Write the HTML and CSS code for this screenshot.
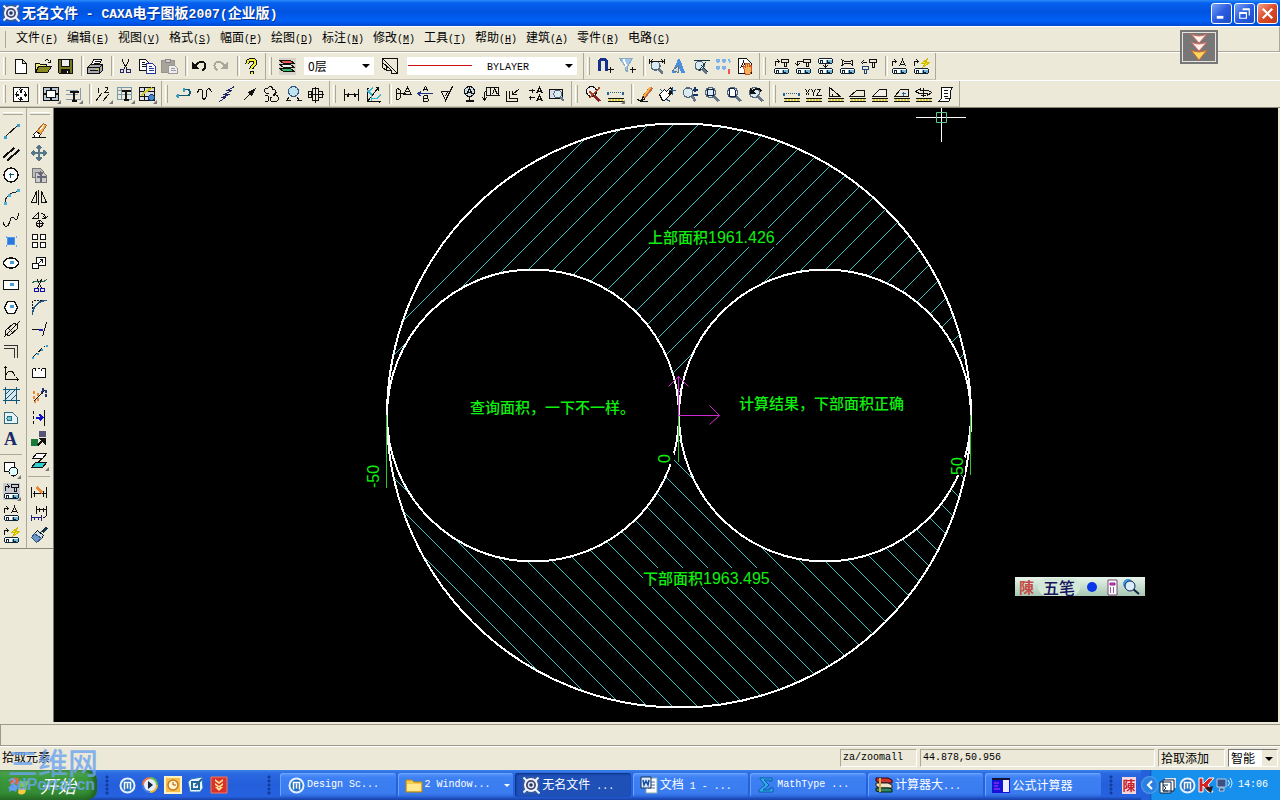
FILE: index.html
```html
<!DOCTYPE html>
<html lang="zh-CN">
<head>
<meta charset="utf-8">
<title>无名文件 - CAXA电子图板2007(企业版)</title>
<link rel="stylesheet" href="styles.css">
</head>
<body>
<svg class="defs" aria-hidden="true">
  <symbol id="hg" viewBox="0 0 18 18"><rect x="2" y="11" width="14" height="5" rx="2" fill="#fff" stroke="#123"/><path d="M9 12h6v3H9z" fill="#6fb8dc" stroke="none"/><path d="M4 12v3M6 12v3M4 13h2M11 12v3h2v-1" stroke="#123"/></symbol>
  <symbol id="lens" viewBox="0 0 18 18"><path d="M12 11l4 5" stroke="#678" stroke-width="3"/><circle cx="8" cy="7" r="5" fill="#d8eaf2" stroke="#567" stroke-width="1.5"/></symbol>
  <symbol id="rule" viewBox="0 0 18 18"><path d="M1 13h16M1 16h16" stroke="#111"/><path d="M2 14.500h14" stroke="#dc3" stroke-width="2" stroke-dasharray="2 1"/></symbol>
  <symbol id="caxa" viewBox="0 0 18 18"><rect width="17" height="17" fill="#345a9c" stroke="none"/><path d="M1 1l5 5M16 1l-4 4M1 16l4-4M12 12l5 5" stroke="#e8f0ff" stroke-width="2"/><circle cx="8.500" cy="8.500" r="6" fill="#446" stroke="#f2f5ff" stroke-width="2"/><circle cx="8.500" cy="8.500" r="2.500" stroke="#dce6ff" stroke-width="1.500" fill="#235"/></symbol>
  <symbol id="maxthon" viewBox="0 0 18 18"><circle cx="9" cy="9" r="7" fill="#246fc4" stroke="#e4f0ff" stroke-width="2"/><path d="M6 13V6h6v7M9 7v5" stroke="#fff" stroke-width="1.500"/></symbol>
</svg>

<header class="title">
  <svg class="i" viewBox="-.5 -.5 18 18"><use href="#caxa"/></svg>
  <h1>无名文件<span class="tl"> - CAXA</span>电子图板<span class="tl">2007(</span>企业版<span class="tl">)</span></h1>
  <div class="win">
    <button aria-label="最小化"><svg viewBox="0 0 20 20"><path d="M5 14h7" stroke-width="3"/></svg></button>
    <button aria-label="还原"><svg viewBox="0 0 20 20"><path d="M8 5h7v7M8 6h7M5 9h7v6H5zM5 10h7"/></svg></button>
    <button class="close" aria-label="关闭"><svg viewBox="0 0 20 20"><path d="M5 5l10 10M15 5L5 15" stroke-width="2.400"/></svg></button>
  </div>
</header>

<nav class="menu">
  <a href="#">文件<span>(<u>F</u>)</span></a><a href="#">编辑<span>(<u>E</u>)</span></a><a href="#">视图<span>(<u>V</u>)</span></a><a href="#">格式<span>(<u>S</u>)</span></a><a href="#">幅面<span>(<u>P</u>)</span></a><a href="#">绘图<span>(<u>D</u>)</span></a><a href="#">标注<span>(<u>N</u>)</span></a><a href="#">修改<span>(<u>M</u>)</span></a><a href="#">工具<span>(<u>T</u>)</span></a><a href="#">帮助<span>(<u>H</u>)</span></a><a href="#">建筑<span>(<u>A</u>)</span></a><a href="#">零件<span>(<u>R</u>)</span></a><a href="#">电路<span>(<u>C</u>)</span></a>
</nav>

<div class="bars">
  <div class="bar">
    <button aria-label="新建"><svg viewBox="-.5 -.5 18 18"><path d="M3 2h7l4 4v10H3zM10 2v4h4" fill="#fff"/></svg></button>
    <button aria-label="打开"><svg viewBox="-.5 -.5 18 18"><path d="M1 15V6h4l1 1h6v2" fill="#ee8"/><path d="M1 15l3-6h13l-4 6z" fill="#8a8a22"/><path d="M10 4c2-3 4-2 5 0M16 2v3h-3"/></svg></button>
    <button aria-label="保存"><svg viewBox="-.5 -.5 18 18"><path d="M2 2h14v14H3l-1-1z" fill="#787820"/><path d="M5 2h8v7H5z" fill="#eee"/><path d="M5 12h8v4H5z" fill="#111"/><path d="M11 13v2" stroke="#fff"/></svg></button>
    <i class="sep"></i>
    <button aria-label="打印"><svg viewBox="-.5 -.5 18 18"><path d="M5 7l2-5h8l-2 5" fill="#fff"/><path d="M8 4h5M7 6h5"/><path d="M1 10l3-3h12v6l-3 3H1z" fill="#aaa"/><path d="M1 10h12v6M13 10l3-3M3 13h8" /><path d="M9 12h2" stroke="#dd2"/></svg></button>
    <i class="sep"></i>
    <button aria-label="剪切"><svg viewBox="-.5 -.5 18 18"><path d="M6 1v3l5 8M12 1v3l-5 8"/><circle cx="5.500" cy="13.500" r="2" stroke="#226"/><circle cx="12" cy="13.500" r="2" stroke="#226"/></svg></button>
    <button aria-label="复制"><svg viewBox="-.5 -.5 18 18"><path d="M1 2h6l3 3v8H1z" fill="#fff"/><path d="M3 5h3M3 7h5M3 9h5"/><path d="M8 6h6l3 3v7H8z" fill="#fff" stroke="#239"/><path d="M10 9h3M10 11h5M10 13h5" stroke="#239"/></svg></button>
    <button aria-label="粘贴"><svg viewBox="-.5 -.5 18 18"><path d="M1 3h13v12H1z" fill="#aaa59a" stroke="#999488"/><path d="M5 2h5v3H5z" fill="#ccc" stroke="#888"/><path d="M8 8h6l3 3v5H8z" fill="#eee" stroke="#999"/><path d="M10 11h4M10 13h5" stroke="#999"/></svg></button>
    <i class="sep"></i>
    <button aria-label="撤消"><svg viewBox="-.5 -.5 18 18"><path d="M2 5v6h6z" fill="#111"/><path d="M4 9c4-6 11-6 11-1 0 2-1 4-3 5" stroke-width="2"/></svg></button>
    <button aria-label="重做"><svg viewBox="-.5 -.5 18 18"><path d="M15 5v6H9z" fill="#aaa69b" stroke="#aaa69b"/><path d="M13 9C9 3 2 3 2 8c0 2 1 4 3 5" stroke="#aaa69b" stroke-width="2"/></svg></button>
    <i class="sep"></i>
    <button aria-label="帮助"><svg viewBox="-.5 -.5 18 18"><path d="M5 6c0-5 8-5 8-1 0 3-4 3-4 6M9 13v3" stroke="#111" stroke-width="4"/><path d="M5 6c0-5 8-5 8-1 0 3-4 3-4 6M9 14v2" stroke="#ee3" stroke-width="2"/></svg></button>
  </div>
  <div class="bar">
    <button aria-label="层控制"><svg viewBox="-.5 -.5 18 18"><rect width="17" height="17" fill="#d6d3ca" stroke="none"/><path d="M1 3h11l4 3H5z" fill="#e55"/><path d="M1 7h11l4 3H5z" fill="#eee"/><path d="M1 11h11l4 3H5z" fill="#3b6"/></svg></button>
    <label class="combo layer"><select aria-label="当前层"><option>0层</option></select></label>
    <button aria-label="线型"><svg viewBox="-.5 -.5 18 18"><path d="M1 1h15v15M1 1l15 15M1 1v9l4 3M1 5l9 8M5 13h5M10 16h6M5 9v4M10 12v4"/></svg></button>
    <label class="combo color"><select aria-label="颜色"><option>BYLAYER</option></select></label>
  </div>
  <div class="bar">
    <button aria-label="捕捉"><svg viewBox="-.5 -.5 18 18"><path d="M3 13V5c0-4 7-4 7 0v8" stroke="#14308c" stroke-width="3"/><path d="M14 9v6M11 12h6"/></svg></button>
    <button aria-label="过滤"><svg viewBox="-.5 -.5 18 18"><path d="M1 1h13l-5 8v5l-2-1V9z" fill="#9cc4ee" stroke="#8ab"/><path d="M5 2l3 7" stroke="#fff" stroke-width="2"/><path d="M14 9v6M11 12h6"/></svg></button>
    <i class="sep"></i>
    <button aria-label="标注设置"><svg viewBox="-.5 -.5 18 18"><use href="#lens" y="2" width="16" height="16"/><path d="M1 1v5M16 1v5M2 4h13M4 2L2 4l2 2M13 2l2 2-2 2"/></svg></button>
    <button aria-label="文字参数"><svg viewBox="-.5 -.5 18 18"><path d="M2 15L8 2l1 0 5 13h-3l-1-4H7l-2 4z" fill="#4a90e0" stroke="#4a90e0"/><path d="M2 13l6-5v7z" fill="#cde" stroke="#678"/></svg></button>
    <button aria-label="拾取设置"><svg viewBox="-.5 -.5 18 18"><use href="#lens" y="2" width="16" height="16"/><path d="M1 3h16M13 5l-7 9M9 8l7 7" stroke="#134"/></svg></button>
    <button aria-label="点样式"><svg viewBox="-.5 -.5 18 18"><path d="M2 2l3 3M5 2L2 5M8 2l3 3M11 2L8 5M14 2l2 3M2 9l3 3M5 9l-3 3M8 9l3 3M11 9l-3 3" stroke="#7ab4ea" stroke-width="2"/><path d="M14 11v5" stroke="#e55" stroke-width="2"/></svg></button>
    <button aria-label="属性"><svg viewBox="-.5 -.5 18 18"><path d="M2 1h8l5 5v10H2z" fill="#fff"/><path d="M4 11l3-7 3 7M5 9h4"/><path d="M7 10V8l2 2V6h2v3V6h2v3l2-1v6l-2 3H9z" fill="#f6b05a" stroke="#c52"/></svg></button>
  </div>
  <div class="bar">
    <button aria-label="尺寸公差"><svg viewBox="-.5 -.5 18 18"><use href="#hg" width="18" height="18"/><path d="M3 8V4h4M5 2l2 2-2 2M9 2h7v3H9zM12 5v4h2V5"/></svg></button>
    <button aria-label="标注编辑"><svg viewBox="-.5 -.5 18 18"><use href="#hg" width="18" height="18"/><path d="M8 4H3v4M1 6l2 2 2-2M9 2h7v3H9zM12 5v4h2V5"/></svg></button>
    <button aria-label="尺寸驱动"><svg viewBox="-.5 -.5 18 18"><use href="#hg" width="18" height="18"/><use href="#hg" y="-10" width="18" height="18"/><path d="M9 6v4M7 8l2 2 2-2"/></svg></button>
    <button aria-label="尺寸关联"><svg viewBox="-.5 -.5 18 18"><use href="#hg" width="18" height="18"/><path d="M3 2l3 2h6l3-2M3 8l3-2h6l3 2M4 2v6M14 2v6"/></svg></button>
    <button aria-label="标题栏"><svg viewBox="-.5 -.5 18 18"><path d="M9 2h7v3H9zM12 5v5h2V5M2 5h4M3 3L1 5l2 2"/><path d="M2 9h6v3H2zM4 12v4h2v-4" stroke="#247"/></svg></button>
    <i class="sep"></i>
    <button aria-label="文字编辑"><svg viewBox="-.5 -.5 18 18"><use href="#hg" width="18" height="18"/><path d="M2 8V4h4M4 2l2 2-2 2M9 9l3-7 3 7M10 7h4"/></svg></button>
    <button aria-label="快速标注"><svg viewBox="-.5 -.5 18 18"><use href="#hg" width="18" height="18"/><path d="M2 8V4h4M4 2l2 2-2 2"/><path d="M15 1L9 6h4l-3 4 7-5h-4z" fill="#fe3" stroke="#cb0"/></svg></button>
  </div>
</div>

<div class="bars">
  <div class="bar">
    <button aria-label="图幅设置"><svg viewBox="-.5 -.5 18 18"><path d="M1 2h15v14H1z" fill="#fff"/><path d="M8 4v3M8 11v3M3 9h3M11 9h3" stroke-width="2"/><path d="M6 5l2-2 3 2M6 13l2 2 3-2M5 6L3 9l2 3M12 6l2 3-2 3"/></svg></button>
    <i class="sep"></i>
    <button class="more" aria-label="调入图框"><svg viewBox="-.5 -.5 18 18"><path d="M1 2h15v13H1z" fill="#b8c8d8"/><path d="M4 5h9v7H4z" fill="#fff"/><path d="M8 2v3M8 12v3M1 8h3M13 8h3" stroke-width="2"/></svg></button>
    <button class="more" aria-label="调入标题栏"><svg viewBox="-.5 -.5 18 18"><path d="M1 5h12M1 9h12M1 14h15V2" stroke="#89a"/><path d="M5 6h9M9 6v9M7 15h5" stroke-width="2"/></svg></button>
    <i class="sep"></i>
    <button class="more" aria-label="生成序号"><svg viewBox="-.5 -.5 18 18"><path d="M4 2v5M3 3h1M10 2h3v2l-3 3h4M1 16L7 8M8 16l6-7"/></svg></button>
    <button class="more" aria-label="填写明细表"><svg viewBox="-.5 -.5 18 18"><path d="M1 2h14v12H1zM1 5h14M1 9h14M5 2v12" stroke="#79a"/><path d="M5 5h9M9 5v9M7 14h5" stroke-width="2"/></svg></button>
    <button class="more" aria-label="明细表样式"><svg viewBox="-.5 -.5 18 18"><path d="M1 2h15v13H1z" fill="#dde"/><path d="M1 6h15M1 11h15M6 2v13"/><path d="M3 10l8-7M6 7l8-5" stroke="#cc2" stroke-width="2"/><circle cx="13" cy="12" r="3" fill="#48c" stroke="#136"/></svg></button>
  </div>
  <div class="bar">
    <button aria-label="双向箭头"><svg viewBox="-.5 -.5 18 18"><path d="M1 10h11c5 0 5-6 0-6H9" stroke="#157" stroke-width="1.500"/><path d="M3 8v4M9 2v4M1 10h3" stroke="#3aa0c0" stroke-width="2"/></svg></button>
    <button aria-label="波浪线"><svg viewBox="-.5 -.5 18 18"><path d="M1 8c1-6 5-6 5 0v2c0 5 3 5 4 0V7c0-5 4-5 5 0"/></svg></button>
    <button aria-label="双折线"><svg viewBox="-.5 -.5 18 18"><path d="M1 16l6-4H3l8-3H6l7-4H9l7-4" stroke="#226"/></svg></button>
    <button aria-label="箭头"><svg viewBox="-.5 -.5 18 18"><path d="M3 15L15 3"/><path d="M14 4l-3 6-3-3z" fill="#111"/></svg></button>
    <button aria-label="云线"><svg viewBox="-.5 -.5 18 18"><path d="M6 8C1 8 1 2 5 3c1-3 6-2 5 1 4-1 5 4 1 5M3 10c4-1 4 4 2 6H2M11 10c4-2 7 3 3 6H9c-3-3-1-5 1-4"/></svg></button>
    <button aria-label="局部放大"><svg viewBox="-.5 -.5 18 18"><circle cx="9" cy="6" r="5" fill="#bfe4ee" stroke="#358"/><path d="M2 16l2-4M15 16l-2-4M1 15h5M12 15h5"/></svg></button>
    <button aria-label="轴孔"><svg viewBox="-.5 -.5 18 18"><path d="M1 9h16M2 6h3v6H2zM6 3h6v12H6zM12 6h4v6h-4M9 1v16"/></svg></button>
  </div>
  <div class="bar">
    <button aria-label="基本标注"><svg viewBox="-.5 -.5 18 18"><path d="M2 3v12M16 3v12M2 9h14M6 7v4M12 7v4M5 8v3M13 8v3"/></svg></button>
    <button aria-label="坐标标注"><svg viewBox="-.5 -.5 18 18"><path d="M3 2v14h13M3 16L14 2M14 2v3M14 2h-3M2 3h2M15 15v2"/><path d="M3 5l4 4v6M17 9l-5 4H6M5 5l4-3" stroke="#38b4d4" stroke-width="1.500"/></svg></button>
    <i class="sep"></i>
    <button aria-label="倒角标注"><svg viewBox="-.5 -.5 18 18"><path d="M2 3c6 0 6 11 0 11M2 3v11M2 8h9M9 9l4-7 4 7zM11 6h4"/></svg></button>
    <button aria-label="基准代号"><svg viewBox="-.5 -.5 18 18"><path d="M1 8h15M5 6L1 8l4 3" stroke="#238"/><path d="M6 6l3-5 3 5M7 4h4M7 10v6h3c3 0 2-3 0-3H7M10 13c2 0 2-3 0-3H7"/></svg></button>
    <button aria-label="粗糙度"><svg viewBox="-.5 -.5 18 18"><path d="M2 6h8M3 6l4 9 7-14M9 6l-2 5"/></svg></button>
    <button aria-label="基准"><svg viewBox="-.5 -.5 18 18"><circle cx="9" cy="6" r="5" fill="#cfdfe8"/><path d="M6 9l3-6 3 6M7 7h4M9 11v4"/><path d="M5 15h8" stroke-width="2"/></svg></button>
    <button aria-label="形位公差"><svg viewBox="-.5 -.5 18 18"><path d="M4 2h12v8H4zM8 2v8M10 9l2-6 3 6M2 6v9M0 12l2 3 2-3M4 6H2M13 10h4"/></svg></button>
    <button aria-label="剖切符号"><svg viewBox="-.5 -.5 18 18"><path d="M2 5v11h11v-4M5 5v8h8M8 9l7-6M8 9V5M8 9h4"/></svg></button>
    <button aria-label="向视图"><svg viewBox="-.5 -.5 18 18"><path d="M2 5h6M6 3v4M2 12h6M4 10v4M10 8l3-6 3 6M11 6h4M10 16l3-6 3 6M11 14h4"/></svg></button>
    <button aria-label="引出说明"><svg viewBox="-.5 -.5 18 18"><path d="M1 4h13v9H1z" fill="#dde"/><use href="#lens" x="3" y="3" width="14" height="14"/></svg></button>
  </div>
  <div class="bar">
    <button aria-label="显示窗口"><svg viewBox="-.5 -.5 18 18"><circle cx="7" cy="6" r="5" fill="#eee"/><path d="M10 10l5 6" stroke="#822" stroke-width="3"/><path d="M5 13l10-11M5 6l4 4" stroke="#a42" stroke-width="1.500"/></svg></button>
    <button class="more" aria-label="测距"><svg viewBox="-.5 -.5 18 18"><use href="#rule" width="18" height="18"/><path d="M1 7h16" stroke="#357" stroke-dasharray="1 1"/><path d="M1 6v3M16 6v3" stroke="#269" stroke-width="2"/></svg></button>
    <i class="sep"></i>
    <button aria-label="重画"><svg viewBox="-.5 -.5 18 18"><path d="M15 2L7 12" stroke="#b64" stroke-width="4"/><path d="M14 2L7 11" stroke="#f8b040" stroke-width="2"/><path d="M7 11l-2 4 4-2M1 14l4 2h6"/></svg></button>
    <button aria-label="平移"><svg viewBox="-.5 -.5 18 18"><path d="M1 9l5-5 2 2 4-4 1 2-3 4 4-2-4 5-4 4H4z" fill="#fff"/><path d="M14 1v8M10 5h7M2 4l3 3M8 14l4 2" stroke="#258"/></svg></button>
    <button aria-label="缩放"><svg viewBox="-.5 -.5 18 18"><use href="#lens" width="17" height="18"/><path d="M12 4h5M14 1v5M12 9h5" stroke="#136" stroke-width="2"/></svg></button>
    <button aria-label="窗口缩放"><svg viewBox="-.5 -.5 18 18"><use href="#lens" width="18" height="18"/><path d="M5 4h6v6H5z" stroke="#124"/></svg></button>
    <button aria-label="显示全部"><svg viewBox="-.5 -.5 18 18"><use href="#lens" width="18" height="18"/><path d="M5 3h4l2 2v6H5z" stroke="#124" fill="#fff"/></svg></button>
    <button aria-label="显示回溯"><svg viewBox="-.5 -.5 18 18"><use href="#lens" width="18" height="18"/><path d="M4 3v5h5z" fill="#111"/><path d="M6 6c3-4 8-3 9 0" stroke-width="2"/></svg></button>
  </div>
  <div class="bar">
    <button aria-label="两点距离"><svg viewBox="-.5 -.5 18 18"><use href="#rule" width="18" height="18"/><path d="M1 8h16" stroke="#357" stroke-dasharray="1 1"/><path d="M1 7v3M16 7v3" stroke="#269" stroke-width="2"/></svg></button>
    <button aria-label="点坐标"><svg viewBox="-.5 -.5 18 18"><use href="#rule" width="18" height="18"/><path d="M1 4l4 6M5 4l-4 6M7 4l2 3 2-3M9 7v3M12 4h4l-4 6h5"/></svg></button>
    <button aria-label="角度"><svg viewBox="-.5 -.5 18 18"><use href="#rule" width="18" height="18"/><path d="M3 2v9h11zM6 8v2"/></svg></button>
    <button aria-label="元素属性"><svg viewBox="-.5 -.5 18 18"><use href="#rule" width="18" height="18"/><path d="M1 11h15V5H8z"/></svg></button>
    <button aria-label="周长"><svg viewBox="-.5 -.5 18 18"><use href="#rule" width="18" height="18"/><path d="M2 11h14V4H9z" fill="#f4f2e8"/></svg></button>
    <button aria-label="面积"><svg viewBox="-.5 -.5 18 18"><use href="#rule" width="18" height="18"/><path d="M2 11h14V4H8z"/><path d="M11 6v4M9 8h4" stroke="#26a"/></svg></button>
    <button aria-label="重心"><svg viewBox="-.5 -.5 18 18"><use href="#rule" width="18" height="18"/><path d="M1 6l5-3v2h8l3 2-4 3v-2H5zM6 10h5M9 2v9"/></svg></button>
    <button aria-label="系统状态"><svg viewBox="-.5 -.5 18 18"><path d="M5 2h11l-2 3v8l-2 3H2l3-3z" fill="#fff"/><path d="M7 5h4M7 8h4M7 11h4M14 4v9H8"/></svg></button>
  </div>
</div>

<main class="work">
  <div class="sides">
    <div class="side">
      <button aria-label="直线"><svg viewBox="-.5 -.5 18 18"><path d="M3 14L15 3"/><path d="M1 15h3M14 3h3" stroke="#3aa0d0" stroke-width="3"/></svg></button>
      <button aria-label="平行线"><svg viewBox="-.5 -.5 18 18"><path d="M1 13L12 3M5 16L17 5" stroke-width="2"/></svg></button>
      <button aria-label="圆"><svg viewBox="-.5 -.5 18 18"><circle cx="8.500" cy="8.500" r="7" fill="#fff" stroke-width="1.500"/><path d="M8 6v5M6 8h5" stroke="#157" stroke-width="1.500"/></svg></button>
      <button aria-label="圆弧"><svg viewBox="-.5 -.5 18 18"><path d="M2 15C3 8 8 4 15 3" stroke="#123"/><path d="M1 15h3M5 7h3M14 2h3" stroke="#4ab0d8" stroke-width="3"/></svg></button>
      <button aria-label="样条"><svg viewBox="-.5 -.5 18 18"><path d="M1 12c1 6 5 4 6 0s2-7 5-4 3-1 4-5"/></svg></button>
      <button aria-label="点"><svg viewBox="-.5 -.5 18 18"><path d="M5 5h7v7H5z" fill="#2878e0" stroke="#4a98ee"/><path d="M3 4h1M13 4h1M3 13h1M13 13h1" stroke="#6af" stroke-width="2"/></svg></button>
      <button aria-label="椭圆"><svg viewBox="-.5 -.5 18 18"><ellipse cx="8.500" cy="8.500" rx="7.500" ry="5" fill="#fff" stroke-width="1.500"/><path d="M7 8h4" stroke="#48a0d0" stroke-width="3"/></svg></button>
      <button aria-label="矩形"><svg viewBox="-.5 -.5 18 18"><path d="M1 4h15v9H1z" fill="#fff" stroke-width="1.500"/><path d="M7 8h4" stroke="#48a0d0" stroke-width="3"/></svg></button>
      <button aria-label="多边形"><svg viewBox="-.5 -.5 18 18"><path d="M5 3h7l3 6-3 6H5L2 9z" fill="#fff"/><path d="M7 8h4" stroke="#48a0d0" stroke-width="3"/></svg></button>
      <button aria-label="孔轴"><svg viewBox="-.5 -.5 18 18"><path d="M3 10l8-7 4 1v4l-8 7-4-1zM1 17L17 1M6 8l4 4"/></svg></button>
      <button aria-label="等距线"><svg viewBox="-.5 -.5 18 18"><path d="M1 3h14v12M1 6h11v9" stroke="#333"/></svg></button>
      <button aria-label="公式曲线"><svg viewBox="-.5 -.5 18 18"><path d="M3 2v13h13M1 4l2-2 2 2M14 13l2 2-2 2M3 11c4-7 7-5 10 1"/></svg></button>
      <button aria-label="剖面线"><svg viewBox="-.5 -.5 18 18"><path d="M3 3h11v11H3z" fill="#d4e8ee"/><path d="M3 0v17M14 0v17M0 3h17M0 14h17M3 8l5-5M3 13L13 3M8 14l6-6" stroke="#157"/></svg></button>
      <button aria-label="填充"><svg viewBox="-.5 -.5 18 18"><path d="M2 4h8l5 5v6H2z" fill="#e6f4f8" stroke="#367"/><circle cx="7" cy="10" r="2.500" fill="#7cc" stroke="#268"/></svg></button>
      <button aria-label="文字"><svg viewBox="-.5 -.5 18 18"><text x="8" y="14" class="ga">A</text></svg></button>
      <i class="sep"></i>
      <button class="more" aria-label="块操作"><svg viewBox="-.5 -.5 18 18"><path d="M2 2h10v9H2z" fill="#fff"/><circle cx="11" cy="11" r="4.500" fill="#dff"/></svg></button>
      <button class="more" aria-label="库操作"><svg viewBox="-.5 -.5 18 18"><rect width="17" height="17" fill="#c8ccd0" stroke="none"/><use href="#hg" width="18" height="18"/><path d="M3 8V4h4M5 2l2 2-2 2M9 2h7v3H9zM12 5v4h2V5"/></svg></button>
      <button aria-label="文本编辑"><svg viewBox="-.5 -.5 18 18"><use href="#hg" width="18" height="18"/><path d="M2 8V4h4M4 2l2 2-2 2M9 9l3-7 3 7M10 7h4"/></svg></button>
      <button aria-label="快速编辑"><svg viewBox="-.5 -.5 18 18"><use href="#hg" width="18" height="18"/><path d="M2 8V4h4M4 2l2 2-2 2"/><path d="M15 1L9 6h4l-3 4 7-5h-4z" fill="#fe3" stroke="#cb0"/></svg></button>
    </div>
    <div class="side">
      <button aria-label="删除"><svg viewBox="-.5 -.5 18 18"><path d="M1 15h14"/><path d="M6 9l7-8 3 2-6 9z" fill="#f0b050" stroke="#a63"/><path d="M3 12l3-3 4 3-2 3H5z" fill="#fff"/><path d="M9 8l4-5" stroke="#fff"/></svg></button>
      <button aria-label="平移"><svg viewBox="-.5 -.5 18 18"><path d="M8.500 2v13M2 8.500h13M6 4l2.500-3L11 4M6 13l2.500 3 2.500-3M4 6L1 8.500 4 11M13 6l3 2.500-3 2.500" stroke="#578" stroke-width="2"/></svg></button>
      <button aria-label="平移复制"><svg viewBox="-.5 -.5 18 18"><path d="M2 2h8l3 3v6H2z" fill="#bbb" stroke="#777"/><path d="M5 6h8l3 3v7H5z" fill="#ccc" stroke="#777"/><path d="M10 6v9M6 10h9M8 8l2-2 2 2" stroke="#667" stroke-width="2"/></svg></button>
      <button aria-label="镜像"><svg viewBox="-.5 -.5 18 18"><path d="M6 3v11H1zM11 3v11h5zM8 1v15"/></svg></button>
      <button aria-label="旋转"><svg viewBox="-.5 -.5 18 18"><path d="M2 8l6-6v6zM10 3c4 0 5 3 5 5h-4M13 6l2 2 2-2"/><circle cx="9" cy="13" r="3"/><path d="M9 9v8M5 13h8"/></svg></button>
      <button aria-label="阵列"><svg viewBox="-.5 -.5 18 18"><path d="M2 2h5v5H2zM10 2h5v5h-5zM2 10h5v5H2zM10 10h5v5h-5z" fill="#fff"/></svg></button>
      <button aria-label="比例缩放"><svg viewBox="-.5 -.5 18 18"><path d="M6 3h9v8H6z" fill="#fff"/><path d="M2 9h6v5H2z" fill="#fff"/><path d="M8 9l4-4M12 8V5H9"/></svg></button>
      <button aria-label="裁剪"><svg viewBox="-.5 -.5 18 18"><path d="M2 6c5-4 9 3 14-3" stroke="#265"/><path d="M7 3l4 9M11 3l-4 9"/><circle cx="6" cy="13.500" r="2" stroke="#11a"/><circle cx="12" cy="13.500" r="2" stroke="#11a"/></svg></button>
      <button aria-label="过渡"><svg viewBox="-.5 -.5 18 18"><path d="M2 16V2h14" stroke-dasharray="2 1"/><path d="M2 16C2 8 8 2 16 2" stroke="#258" stroke-width="1.500"/></svg></button>
      <button aria-label="延伸"><svg viewBox="-.5 -.5 18 18"><path d="M1 9h7"/><path d="M8 9h4" stroke="#22c" stroke-width="2"/><path d="M16 2l-4 14"/></svg></button>
      <button aria-label="打断"><svg viewBox="-.5 -.5 18 18"><path d="M3 14L15 3" stroke-dasharray="5 2"/><path d="M1 15h2M6 11h2M10 7h2M15 3h2" stroke="#3aa0d0" stroke-width="2"/></svg></button>
      <button aria-label="拉伸"><svg viewBox="-.5 -.5 18 18"><path d="M2 4h3M11 4h4v9H2V4" fill="#fff"/><path d="M5 4v2M11 4v2M7 4h2"/></svg></button>
      <button aria-label="打散"><svg viewBox="-.5 -.5 18 18"><path d="M11 3h2M14 5h2M10 6h2M14 9h2" stroke="#237" stroke-width="3"/><path d="M2 6h2M6 8h2M2 11h2M6 13h2M3 15h2" stroke="#e83" stroke-width="3"/><path d="M3 15L14 4"/></svg></button>
      <button aria-label="局部移动"><svg viewBox="-.5 -.5 18 18"><path d="M3 2v14" stroke-dasharray="3 2"/><path d="M14 1v16" stroke-width="1.500"/><path d="M5 9h7M9 6l3 3-3 3" stroke="#11c" stroke-width="2"/></svg></button>
      <button aria-label="格式刷"><svg viewBox="-.5 -.5 18 18"><path d="M9 1h6v5H9z" fill="#557" stroke="#557"/><path d="M1 9h6v6H1z" fill="#197a3a" stroke="#197a3a"/><path d="M7 15l6-6" stroke-width="2"/><path d="M9 8h6v6z" fill="#111"/></svg></button>
      <button class="more" aria-label="图层变换"><svg viewBox="-.5 -.5 18 18"><path d="M6 1h10l-4 5H2z" fill="#fff"/><path d="M5 10h11l-4 5H1z" fill="#3cc"/><path d="M12 6l-5 4"/></svg></button>
      <i class="sep"></i>
      <button aria-label="标注修改"><svg viewBox="-.5 -.5 18 18"><path d="M1 4v11M16 4v11M2 11h13M4 8v6M13 8v6"/><path d="M6 5l6 5" stroke="#e83" stroke-width="3"/></svg></button>
      <button aria-label="标注间距"><svg viewBox="-.5 -.5 18 18"><path d="M6 1v8M16 1v8M6 5h10M9 3v4M13 3v4M16 9c0 4-2 4-4 4"/><path d="M1 10v6M11 10v6M1 13h10M4 12v3M8 12v3" stroke="#227"/></svg></button>
      <button aria-label="刷新"><svg viewBox="-.5 -.5 18 18"><path d="M16 1l-4 5" stroke="#134" stroke-width="3"/><path d="M7 4l6 5-2 3-7-5z" fill="#cde"/><path d="M4 7l7 5-5 4-5-5z" fill="#6a98c8" stroke="#357"/></svg></button>
    </div>
  </div>

  <svg class="canvas" viewBox="54 108 1224 614" role="img" aria-label="绘图区">
    <defs>
      <clipPath id="top"><path d="M387 415.500A292 292 0 0 1 971 415.500A146 146 0 0 0 679 415.500A146 146 0 0 0 387 415.500"/></clipPath>
      <clipPath id="bot"><path d="M387 415.500A292 292 0 0 0 971 415.500A146 146 0 0 1 679 415.500A146 146 0 0 1 387 415.500"/></clipPath>
    </defs>
    <g class="hatch" clip-path="url(#top)">
      <path d="M204.500 519.500l400-400M229.500 519.500l400-400M253.500 519.500l400-400M278.500 519.500l400-400M303.500 519.500l400-400M328.500 519.500l400-400M352.500 519.500l400-400M377.500 519.500l400-400M402.500 519.500l400-400M427.500 519.500l400-400M452.500 519.500l400-400M476.500 519.500l400-400M501.500 519.500l400-400M526.500 519.500l400-400M551.500 519.500l400-400M575.500 519.500l400-400M600.500 519.500l400-400M625.500 519.500l400-400M650.500 519.500l400-400M674.500 519.500l400-400M699.500 519.500l400-400M724.500 519.500l400-400M749.500 519.500l400-400M774.500 519.500l400-400M798.500 519.500l400-400M823.500 519.500l400-400M848.500 519.500l400-400"/>
    </g>
    <g class="hatch" clip-path="url(#bot)">
      <path d="M232.500 415.500l400 400M257.500 415.500l400 400M282.500 415.500l400 400M307.500 415.500l400 400M331.500 415.500l400 400M356.500 415.500l400 400M381.500 415.500l400 400M406.500 415.500l400 400M430.500 415.500l400 400M455.500 415.500l400 400M480.500 415.500l400 400M505.500 415.500l400 400M530.500 415.500l400 400M555.500 415.500l400 400M579.500 415.500l400 400M604.500 415.500l400 400M629.500 415.500l400 400M654.500 415.500l400 400M679.500 415.500l400 400M703.500 415.500l400 400M728.500 415.500l400 400M753.500 415.500l400 400M778.500 415.500l400 400M802.500 415.500l400 400M827.500 415.500l400 400M852.500 415.500l400 400M877.500 415.500l400 400M901.500 415.500l400 400"/>
    </g>
    <g class="ring"><circle cx="679" cy="415.500" r="292"/><circle cx="533" cy="415.500" r="146"/><circle cx="825" cy="415.500" r="146"/></g>
    <path class="mask" d="M648 228h128v19H648zM643 568h128v19H643zM656 453h18v11h-18zM948 457h17v18h-17z"/>
    <path class="ext" d="M386.500 415v73M678.500 415v47M970.500 415v60"/>
    <path class="axis" d="M678.500 415.500V376M668.500 386.500l10-10 10 10M679 415.500h40M709.500 405.500l10 10-10 9"/>
    <path class="cross" d="M916 117.500h50M941.500 108v34"/><path class="pick" d="M936.500 112.500h10v10h-10z"/>
    <g class="note">
      <text x="648" y="243">上部面积<tspan>1961.426</tspan></text>
      <text x="643" y="584">下部面积<tspan>1963.495</tspan></text>
      <text x="470" y="413">查询面积，一下不一样。</text>
      <text x="739" y="409">计算结果，下部面积正确</text>
      <text class="dim" transform="translate(379 488) rotate(-90)">-50</text>
      <text class="dim" transform="translate(670 463) rotate(-90)">0</text>
      <text class="dim" transform="translate(963 475) rotate(-90)">50</text>
    </g>
  </svg>
</main>

<div class="cmd"></div>
<div class="status">
  <span class="msg">拾取元素</span>
  <span class="cell za">za/zoomall</span>
  <span class="cell xy">44.878,50.956</span>
  <span class="cell add">拾取添加</span>
  <label class="combo snap"><select aria-label="捕捉方式"><option>智能</option></select></label>
</div>

<footer class="task">
  <button class="start"><svg viewBox="0 0 22 20"><path d="M2 4q4-3 8 0l-1 6q-4-3-8 0z" fill="#e8623a"/><path d="M11 5q4 3 9 0l-2 6q-4 3-8 0z" fill="#7cc84a"/><path d="M1 11q4-3 8 0l-2 6q-3-3-7 0z" fill="#5a9af0"/><path d="M10 12q4 3 8 0l-2 6q-4 3-7 0z" fill="#f4cc3c"/></svg>开始</button>
  <i class="dots"></i>
  <div class="quick">
    <button aria-label="傲游"><svg viewBox="-.5 -.5 18 18"><use href="#maxthon"/></svg></button>
    <button aria-label="播放器"><svg viewBox="0 0 18 18"><path d="M9 1a8 8 0 0 1 8 8H9z" fill="#6bc04a"/><path d="M17 9a8 8 0 0 1-8 8V9z" fill="#f0b83c"/><path d="M9 17a8 8 0 0 1-8-8h8z" fill="#4a80e0"/><path d="M1 9a8 8 0 0 1 8-8v8z" fill="#e8784a"/><circle cx="9" cy="9" r="6" fill="#e8eefa"/><path d="M7 5l5 4-5 4z" fill="#124"/></svg></button>
    <button aria-label="日程"><svg viewBox="0 0 18 18"><path d="M1 1h16v16H1z" fill="#f6c050" stroke="#fff0c0" stroke-width="2"/><circle cx="9" cy="9" r="5" fill="#fff4d0" stroke="#c8781c" stroke-width="1.500"/><path d="M9 6v3h3" stroke="#a50" fill="none"/></svg></button>
    <button aria-label="桌面"><svg viewBox="0 0 18 18"><path d="M4 3l11-2 1 11-3 4H3L1 6z" fill="#e8f4ff" stroke="#2a78c8"/><path d="M5 6h7v7H5zM8 10l7-7" fill="none" stroke="#269" stroke-width="2"/></svg></button>
    <button aria-label="下载"><svg viewBox="0 0 18 18"><path d="M1 1h16v16H1z" fill="#d8322c" stroke="#f87858"/><path d="M5 3l4 3 4-3v2L9 8 5 5zM5 7l4 3 4-3v2l-4 3-4-3zM5 11l4 4 4-4z" fill="#ffe890"/></svg></button>
  </div>
  <i class="dots"></i>
  <div class="tasks">
    <button><svg viewBox="-.5 -.5 18 18"><use href="#maxthon"/></svg><span class="en">Design Sc...</span></button>
    <button class="drop"><svg viewBox="0 0 18 18"><path d="M1 4h6l2 2h8v10H1z" fill="#f4cc50" stroke="#b8860b"/><path d="M2 8h14v7H2z" fill="#ffe890"/></svg><span class="en">2 Window...</span></button>
    <button class="on"><svg viewBox="-.5 -.5 18 18"><use href="#caxa"/></svg><span>无名文件<span class="en"> ...</span></span></button>
    <button><svg viewBox="0 0 18 18"><path d="M6 2h11v15H6z" fill="#fff" stroke="#8aa"/><path d="M8 6h7M8 9h7M8 12h7" stroke="#56a"/><path d="M1 1h10v11H1z" fill="#dce8ff" stroke="#135"/><path d="M3 4l1 5 2-4 2 4 1-5" fill="none" stroke="#124a9c" stroke-width="1.500"/></svg><span>文档<span class="en"> 1 - ...</span></span></button>
    <button><svg viewBox="0 0 18 18"><path d="M3 2h12v3h-2V4H7l5 5-6 5h7v-2h3v4H2v-2l6-5-5-6z" fill="#2cb4e8" stroke="#0c58a8"/></svg><span class="en">MathType ...</span></button>
    <button><svg viewBox="0 0 18 18"><path d="M1 2h12l4 2v3H5L1 5z" fill="#c33" stroke="#300"/><path d="M1 7h12l4 2v3H5l-4-2z" fill="#ede4cc" stroke="#222"/><path d="M1 12h12l4 1v3H5l-4-1z" fill="#386" stroke="#021"/><path d="M5 2v14" stroke="#da4" stroke-width="2"/></svg><span>计算器大<span class="en">...</span></span></button>
    <button><svg viewBox="0 0 18 18"><path d="M0 2h18v15H0z" fill="#1414d8"/><path d="M11 4h6v12h-6z" fill="#eef"/><path d="M0 2h18v2H0z" fill="#113"/><path d="M2 7h5M2 10h4M2 13h6" stroke="#c3f" stroke-width="1"/></svg><span>公式计算器</span></button>
  </div>
  <i class="dots"></i>
  <span class="chen">陳</span>
  <div class="tray">
    <button class="chev" aria-label="显示隐藏的图标"><svg viewBox="0 0 18 18"><path d="M11 5L7 9l4 4" fill="none" stroke="#fff" stroke-width="2"/></svg></button>
    <svg viewBox="0 0 18 18"><path d="M6 2h11v10H6z" fill="#dde"/><path d="M4 4h11v11H4zM1 6h11v11H1z" fill="#fff" stroke="#124"/><path d="M9 9H4l3 3-3 3h5" fill="none" stroke="#135"/></svg>
    <svg viewBox="-.5 -.5 18 18"><use href="#maxthon"/></svg>
    <svg viewBox="0 0 18 18"><path d="M2 2h4v6l6-6h5l-6 7 5 7h-5l-5-6v6H2z" fill="#d82020" stroke="#fff" stroke-width="1"/><path d="M8 12l8-2-2 7z" fill="#222"/></svg>
    <svg viewBox="0 0 18 18"><path d="M1 3h9v8H1zM4 12h4v3H3z" fill="#3a5088" stroke="#bcd"/><path d="M12 4q3 3 0 6M14 2q4 5 0 10" fill="none" stroke="#d8f0ff"/></svg>
    <time>14:06</time>
  </div>
</footer>

<button class="grab" aria-label="下载"><svg viewBox="0 0 32 28"><path d="M8 1q8 4 16 0l-8 9z" fill="#fff2ee" stroke="#d86858"/><path d="M8 9q8 4 16 0l-8 9z" fill="#fff2ee" stroke="#d86858"/><path d="M8 17q8 4 16 0l-8 10z" fill="#ffd860" stroke="#d86830"/></svg></button>
<div class="ime"><b>陳</b><span>五笔</span>
  <svg viewBox="0 0 18 18"><circle cx="8" cy="9" r="5" fill="#0838e8"/></svg>
  <svg viewBox="0 0 18 18"><path d="M5 2h9v15H5z" fill="#fff" stroke="#747"/><path d="M7 5h5v2H7z" fill="#e4a" stroke="#829"/><path d="M7 10h1M10 10h1M7 12h1M10 12h1M7 14h1M10 14h1" stroke="#637" stroke-width="1.500"/></svg>
  <svg viewBox="0 0 18 18"><circle cx="6" cy="6" r="5" fill="#3a98d8"/><path d="M11 11l6 5" stroke="#124" stroke-width="2"/><circle cx="8" cy="8" r="5" fill="#d8eefa" stroke="#125"/></svg>
</div>
<div class="mark"><span>三维网</span><b>3dPortal.cn</b></div>
</body>
</html>
```
FILE: styles.css
```css
* { box-sizing: border-box; }
body {
  margin: 0;
  height: 100vh;
  display: flex;
  flex-direction: column;
  overflow: hidden;
  position: relative;
  background: #ece9d8;
  color: #000;
  font: 12px/16px "Noto Sans CJK SC", sans-serif;
}
button { font: inherit; padding: 0; border: 0; background: none; }
svg { display: block; flex: none; }
.defs { position: absolute; width: 0; height: 0; }

.title {
  display: flex;
  align-items: center;
  height: 26px;
  padding: 0 2px;
  gap: 2px;
  background: linear-gradient(#2a8af8, #0660ee 12%, #0054e0 45%, #0060f8 80%, #0048d0);
  color: #fff;
}
.i { width: 18px; height: 18px; fill: none; }
.title h1 { flex: 1; margin: 0; font-size: 14px; line-height: 20px; font-weight: 700; white-space: pre; text-shadow: 1px 1px #0a2f86; }
.tl { font-family: "Liberation Mono", monospace; font-size: 13px; }
.win { display: flex; gap: 2px; }
.win button { width: 21px; height: 21px; border: 1px solid #fff; border-radius: 3px; background: linear-gradient(135deg, #7aa4f4, #2a5ce0 50%, #1c4cc8); }
.win .close { background: linear-gradient(135deg, #f0a08a, #dc4a28 50%, #c03a18); }
.win svg { width: 19px; height: 19px; fill: none; stroke: #fff; stroke-width: 1.2; }

.menu {
  display: flex;
  align-items: center;
  gap: 9px;
  height: 26px;
  padding: 0 16px 2px;
  border-top: 1px solid #fff;
  border-right: 1px solid #aca899;
  border-bottom: 1px solid #aca899;
  background: linear-gradient(#aca899, #aca899) 5px 4px / 1px 17px no-repeat;
}
.menu a { flex: none; width: 42px; color: #000; text-decoration: none; white-space: nowrap; }
.menu span { font: 10px/16px "Liberation Mono", monospace; }

.bars { display: flex; height: 28px; border-top: 1px solid #fff; }
.bars + .bars { border-bottom: 1px solid #8a8778; }
.bar {
  display: flex;
  align-items: center;
  padding: 0 3px 0 10px;
  border-right: 1px solid #aca899;
  border-bottom: 1px solid #c8c4b4;
  background: linear-gradient(#aca899, #aca899) 5px 4px / 1px 18px no-repeat, linear-gradient(#fff, #fff) 3px 4px / 1px 18px no-repeat;
}
.bar button, .side button { position: relative; width: 22px; height: 22px; display: grid; place-items: center; flex: none; }
.bar svg, .side svg { width: 18px; height: 18px; fill: none; stroke: #111; shape-rendering: crispEdges; }
.more::after { content: ""; position: absolute; right: 1px; bottom: 1px; border: 2px solid; border-color: transparent #777 #777 transparent; }
.bar .sep { width: 8px; height: 20px; border-right: 1px solid #fff; background: linear-gradient(#aca899, #aca899) 5px 0 / 1px 20px no-repeat; }
.bar .sep, .side .sep { flex: none; }

.combo { position: relative; display: block; height: 18px; background: #fff; }
.combo select { width: 100%; height: 100%; appearance: none; border: 0; margin: 0; padding: 0 4px; background: none; color: #000; font: inherit; line-height: 16px; }
.combo::after { content: ""; position: absolute; right: 4px; top: 7px; border: 4px solid transparent; border-top-color: #000; border-bottom: 0; pointer-events: none; }
.layer { width: 70px; margin: 0 5px 0 6px; }
.color { width: 170px; margin: 0 3px 0 6px; }
.color select { padding-left: 80px; font: 10px/16px "Liberation Mono", monospace; }
.color::before { content: ""; position: absolute; left: 1px; top: 8px; width: 64px; height: 1px; background: #d01010; }

.work { flex: 1; min-height: 0; display: flex; padding-right: 2px; }
.sides { display: flex; align-items: flex-start; flex: none; width: 54px; border-right: 1px solid #777; }
.side {
  display: flex;
  flex-direction: column;
  align-items: center;
  width: 27px;
  height: 441px;
  padding: 12px 4px 0 0;
  border-right: 1px solid #aca899;
  border-bottom: 1px solid #8a8778;
  background: linear-gradient(#aca899, #aca899) 3px 6px / 20px 1px no-repeat, linear-gradient(#fff, #fff) 3px 4px / 20px 1px no-repeat;
}
.side + .side { padding: 12px 3px 0 0; border-right: 0; }
.side .sep { width: 22px; height: 8px; background: linear-gradient(#aca899, #aca899) 0 4px / 22px 1px no-repeat; }
.side .ga { font: 700 18px "Liberation Serif", serif; fill: #182868; stroke: none; text-anchor: middle; }
.canvas { flex: 1; min-width: 0; height: 100%; background: #000; fill: none; }
.hatch { stroke: #3cc4c4; }
.ring { stroke: #fff; stroke-width: 2; shape-rendering: crispEdges; }
.mask { fill: #000; }
.ext { stroke: #28c828; shape-rendering: crispEdges; }
.axis { stroke: #d028d0; }
.cross { stroke: #fff; }
.pick { stroke: #5ac88c; }
.note { fill: #10f010; font-size: 15px; font-weight: 500; }
.note .dim, .note tspan { font-family: "Liberation Sans", sans-serif; font-size: 16px; font-weight: 400; }

.cmd { height: 22px; margin-top: 2px; border: 1px solid #9c998a; border-width: 1px 0 1px 1px; }
.status { display: flex; height: 24px; padding: 2px 2px 3px 0; gap: 3px; border-top: 1px solid #fff; }
.msg { flex: 1; padding-left: 2px; }
.cell { height: 18px; padding: 0 2px; border: 1px solid; border-color: #aca899 #fff #fff #aca899; white-space: nowrap; line-height: 15px; }
.za, .xy { font: 10px/16px "Liberation Mono", monospace; }
.za { width: 77px; }
.xy { width: 235px; }
.add { width: 67px; }
.snap { width: 50px; border: 1px solid; border-color: #777 #fff #fff #777; }
.snap select { padding: 0 2px; background: linear-gradient(#ece9d8, #ece9d8) right / 15px 100% no-repeat; }

.task { display: flex; align-items: center; height: 30px; background: linear-gradient(#3a80ea, #2a68e0 12%, #245edb 50%, #2662e0 88%, #1941a5); color: #fff; }
.start {
  display: flex;
  align-items: center;
  gap: 9px;
  width: 97px;
  height: 30px;
  padding-left: 9px;
  border-radius: 0 10px 10px 0;
  background: linear-gradient(#5cac5c, #3c9a3c 25%, #348c34 75%, #287028);
  box-shadow: inset -4px 0 5px #206020;
  color: #fff;
  font-size: 18px;
  font-style: italic;
  white-space: nowrap;
}
.start svg { width: 22px; height: 20px; }
.dots { flex: none; width: 4px; height: 20px; margin: 0 9px 0 8px; background: radial-gradient(circle, #123c9c 1px, transparent 2px) 0 0 / 4px 4px; }
.quick { display: flex; gap: 5px; width: 141px; }
.quick svg, .tasks svg, .tray svg { width: 18px; height: 18px; fill: none; }
.tasks { display: flex; flex: 1; gap: 2px; min-width: 0; }
.tasks button {
  position: relative;
  display: flex;
  align-items: center;
  gap: 2px;
  flex: 0 1 116px;
  height: 24px;
  min-width: 0;
  padding-left: 7px;
  border-radius: 3px;
  background: linear-gradient(#5c98fa, #3c80f4 20%, #3a7cf0 85%, #2c64d4);
  box-shadow: inset 1px 1px #6aa4ff;
  color: #fff;
  white-space: pre;
}
.tasks .on { background: #1e50b8; box-shadow: inset 1px 1px 2px #0c2f80; }
.tasks .en { font: 10px/16px "Liberation Mono", monospace; }
.drop::after { content: ""; position: absolute; right: 3px; top: 11px; border: 3px solid transparent; border-top-color: #fff; border-bottom: 0; }
.chen { flex: none; width: 14px; height: 17px; margin-right: 5px; background: #f4d8dc; color: #c8202c; font: 700 13px/16px "Noto Sans CJK TC", sans-serif; text-align: center; }
.tray { display: flex; align-items: center; gap: 1px; flex: none; height: 30px; width: 139px; background: linear-gradient(90deg, transparent 9px, #0c4ab0 9px, #1690ec 11px), #2460dc; }
.tray .chev { width: 17px; border-radius: 50%; background: #2a80e0; box-shadow: inset 0 0 2px #9cf; }
.tray time { margin-left: 3px; font: 10px/16px "Liberation Mono", monospace; }

.grab { position: absolute; right: 62px; top: 30px; width: 38px; height: 34px; padding: 1px; border: 2px solid #777; background: #777; box-shadow: inset 0 0 0 1px #e8e4dc; }
.grab svg { width: 32px; height: 28px; }
.ime { position: absolute; right: 135px; top: 577px; width: 130px; height: 19px; display: flex; align-items: center; gap: 1px; padding-left: 4px; background: linear-gradient(#e8f4ec, #a8c8b4); }
.ime b { color: #c44c44; font: 700 15px/18px "Noto Sans CJK TC", sans-serif; }
.ime span { width: 42px; margin: 0 3px; border-radius: 9px; background: #d4e8d8; color: #14145c; font-size: 16px; line-height: 18px; font-weight: 500; text-align: center; }
.ime svg { width: 18px; height: 18px; fill: none; }
.mark { position: absolute; left: 8px; bottom: 4px; display: flex; flex-direction: column; color: #6ca4f0; opacity: .8; pointer-events: none; }
.mark span { font-size: 30px; line-height: 26px; font-weight: 500; }
.mark b { font: 700 16px/22px "Liberation Sans", sans-serif; }
```
